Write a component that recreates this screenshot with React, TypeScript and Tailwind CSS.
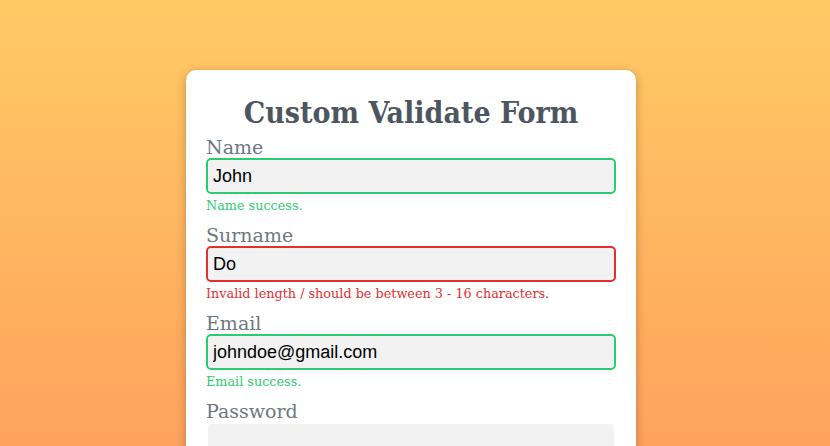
const serif = "font-['DejaVu_Serif',serif]";

type Field = {
    label: string;
    value: string;
    status?: "success" | "error";
    message?: string;
};

const fields: Field[] = [
    { label: "Name", value: "John", status: "success", message: "Name success." },
    { label: "Surname", value: "Do", status: "error", message: "Invalid length / should be between 3 - 16 characters." },
    { label: "Email", value: "johndoe@gmail.com", status: "success", message: "Email success." },
    { label: "Password", value: "" },
];

function FormField({ field }: { field: Field }) {
    const border =
        field.status === "success"
            ? "border-[#2ecc71]"
            : field.status === "error"
              ? "border-[#e52e2e]"
              : "border-white";
    return (
        <div className="flex flex-col">
            <label className={`${serif} text-[19px] leading-[22px] text-[#6e7780]`}>{field.label}</label>
            <input
                readOnly
                value={field.value}
                className={`h-[36px] w-full rounded-[5px] border-2 ${border} bg-[#f2f2f2] px-[5px] font-['Liberation_Sans',sans-serif] text-[18px] text-black outline-none`}
            />
            <div
                className={`${serif} mt-[2px] mb-[8px] h-[20px] text-[12.8px] leading-[20px] ${
                    field.status === "error" ? "text-[#e52e2e]" : "text-[#2ecc71]"
                }`}
            >
                {field.message}
            </div>
        </div>
    );
}

export default function App() {
    return (
        <div className="min-h-screen bg-gradient-to-b from-[#ffca64] to-[#fe9c5c] pt-[70px] pr-[8px]">
            <div className="mx-auto w-[450px] rounded-[10px] bg-white px-[20px] pt-[20px] pb-[20px] shadow-[0_2px_10px_rgba(0,0,0,0.25)]">
                <h1 className={`${serif} font-stretch-condensed h-[46px] text-center text-[30px] leading-[46px] font-bold text-[#4d5660]`}>
                    Custom Validate Form
                </h1>
                {fields.map((f) => (
                    <FormField key={f.label} field={f} />
                ))}
            </div>
        </div>
    );
}
